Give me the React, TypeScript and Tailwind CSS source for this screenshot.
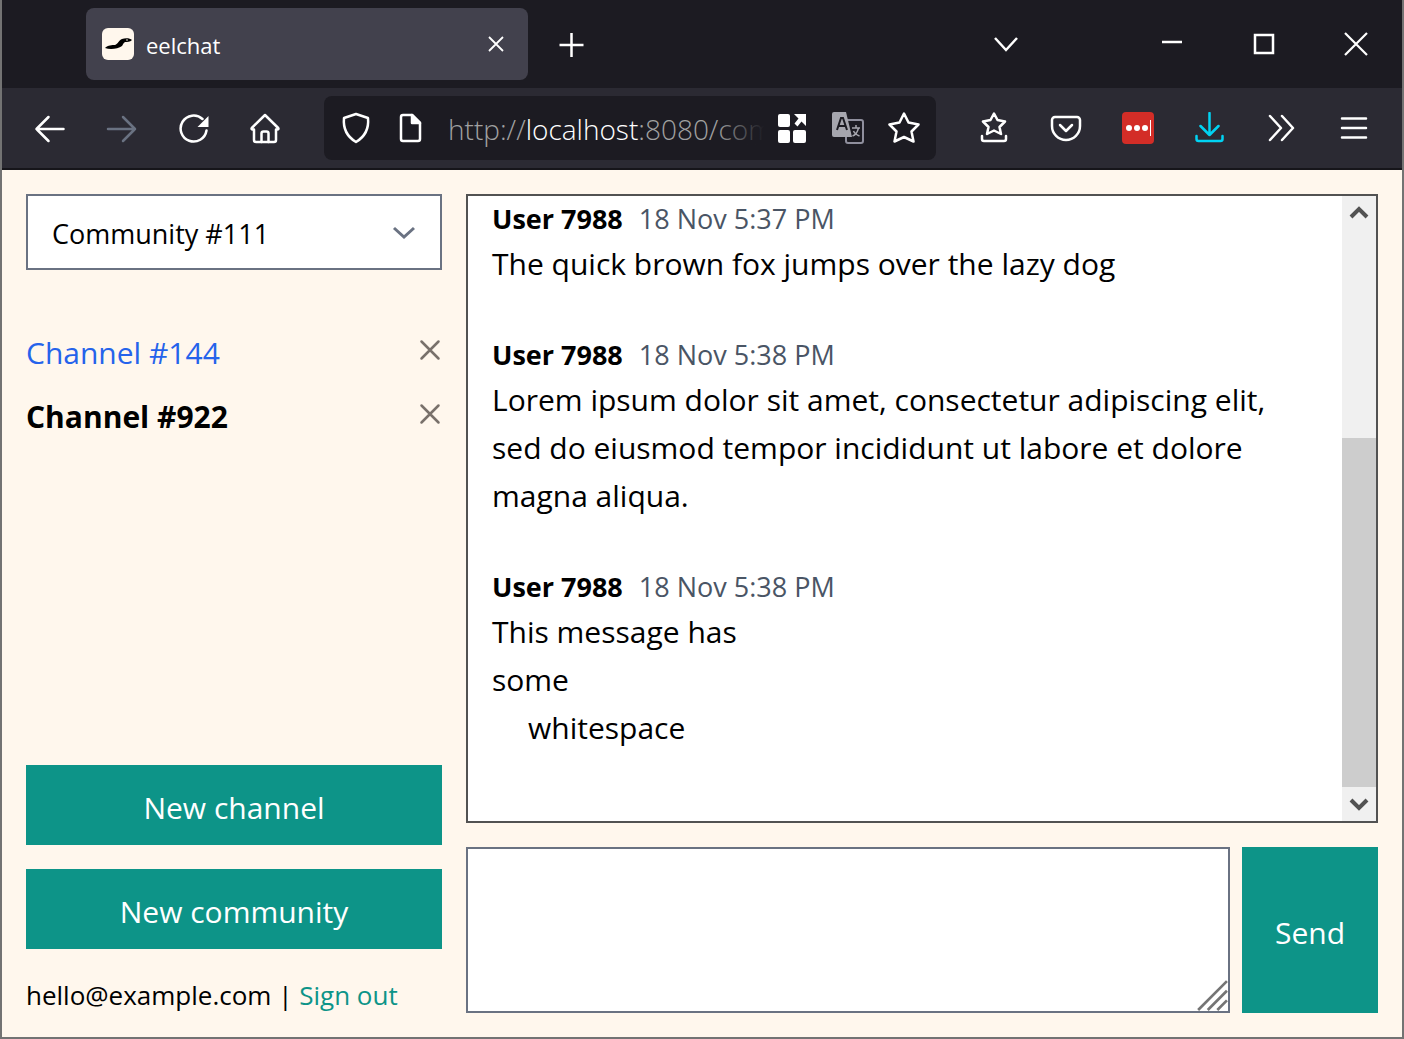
import type { ReactNode } from "react";

const Icon = ({ children, className = "w-8 h-8 text-white" }: { children: ReactNode; className?: string }) => (
  <svg
    viewBox="0 0 32 32"
    fill="none"
    stroke="currentColor"
    strokeWidth={2.5}
    strokeLinecap="round"
    strokeLinejoin="round"
    className={className}
  >
    {children}
  </svg>
);

const ToolButton = ({ children }: { children: ReactNode }) => (
  <div className="w-18 h-full flex items-center justify-center shrink-0">{children}</div>
);

const CloseIcon = () => (
  <svg viewBox="0 0 24 24" fill="none" stroke="currentColor" strokeWidth={2.5} strokeLinecap="round" className="w-6 h-6 text-stone-500">
    <path d="M3.5 3.5l17 17M20.5 3.5l-17 17" />
  </svg>
);

const Message = ({ time, children }: { time: string; children: ReactNode }) => (
  <div className="mb-12">
    <div className="flex items-baseline gap-4 h-10 leading-9.5">
      <span className="text-[27px] font-bold text-black">User 7988</span>
      <span className="text-[27px] text-gray-600">{time}</span>
    </div>
    <div className="text-3xl leading-12 text-black whitespace-pre-wrap">{children}</div>
  </div>
);

const Browser = () => (
  <div className="shrink-0 border-b-2 border-[#16151a]">
    {/* Tab strip */}
    <div className="h-22 bg-[#1c1b22] flex items-center pl-21">
      <div className="w-[442px] h-18 bg-[#42414d] rounded-lg flex items-center pl-4 pr-5">
        <div className="w-8 h-8 rounded-md bg-orange-50 flex items-center justify-center">
          <svg viewBox="0 0 32 32" className="w-8 h-8 text-black">
            <path
              fill="currentColor"
              d="M3 20c3-3 7-3 10-3 3-1 4-5 7-6 3-1 8-1 10 1-2 2-5 2-7 2-2 1-2 3-3 4-4 3-12 4-17 2z"
            />
            <circle cx="25" cy="12" r="0.8" fill="#fff7ed" />
          </svg>
        </div>
        <span className="ml-3 pt-0.5 text-[22px] text-white flex-1">eelchat</span>
        <svg viewBox="0 0 24 24" fill="none" stroke="currentColor" strokeWidth={1.8} className="w-6 h-6 text-white">
          <path d="M5 5l14 14M19 5L5 19" />
        </svg>
      </div>
      <div className="ml-7 w-8 h-8 translate-y-px">
        <svg viewBox="0 0 32 32" fill="none" stroke="currentColor" strokeWidth={2.5} className="w-8 h-8 text-white">
          <path d="M15.500 4v24M3.500 16h24" />
        </svg>
      </div>
      <div className="flex-1" />
      <div className="w-12 flex justify-center mr-24">
        <svg viewBox="0 0 32 32" fill="none" stroke="currentColor" strokeWidth={2.5} className="w-8 h-8 text-white">
          <path d="M5 10l11 12 11-12" />
        </svg>
      </div>
      <div className="w-23 flex justify-center">
        <svg viewBox="0 0 32 32" fill="none" stroke="currentColor" strokeWidth={2.5} className="w-8 h-8 text-white">
          <path d="M6 14h20" />
        </svg>
      </div>
      <div className="w-23 flex justify-center">
        <svg viewBox="0 0 32 32" fill="none" stroke="currentColor" strokeWidth={2.5} className="w-8 h-8 text-white">
          <path d="M7 7h18v18H7z" />
        </svg>
      </div>
      <div className="w-23 flex justify-center">
        <svg viewBox="0 0 32 32" fill="none" stroke="currentColor" strokeWidth={2.2} className="w-8 h-8 text-white">
          <path d="M5 5l22 22M27 5L5 27" />
        </svg>
      </div>
    </div>

    {/* Toolbar */}
    <div className="h-20 bg-[#2b2a33] flex items-center px-3">
      <ToolButton>
        <Icon>
          <path d="M29.500 17H2.500M14.500 5l-12 12 12 12" />
        </Icon>
      </ToolButton>
      <ToolButton>
        <Icon className="w-8 h-8 text-gray-500">
          <path d="M2 17h27M17 5l12 12-12 12" />
        </Icon>
      </ToolButton>
      <ToolButton>
        <Icon>
          <path d="M28.500 18.500a13 13 0 1 1-4-11.500" />
          <path d="M30.500 4v11h-11z" fill="currentColor" stroke="none" />
        </Icon>
      </ToolButton>
      <ToolButton>
        <Icon>
          <path d="M15 3L1.800 16c-.6.8 0 1.500.8 1.500H4V28a2 2 0 0 0 2 2h18a2 2 0 0 0 2-2V17.500h1.400c.8 0 1.400-.7.8-1.500z" />
          <path d="M11.500 30v-8.500a2 2 0 0 1 2-2h3a2 2 0 0 1 2 2V30" />
        </Icon>
      </ToolButton>

      <div className="relative flex-1 min-w-0 h-16 mx-5.5 bg-[#1c1b22] rounded-lg flex items-center pr-1">
        <div className="w-16 flex justify-center shrink-0">
          <Icon>
            <path d="M16 2l12 4c1 10-2 18-12 24C6 24 3 16 4 6z" />
          </Icon>
        </div>
        <div className="w-11 flex justify-center shrink-0">
          <Icon>
            <path d="M9 3h9l8 8v16a2 2 0 0 1-2 2H9a2 2 0 0 1-2-2V5a2 2 0 0 1 2-2z" />
            <path d="M18 3l8 8h-8z" fill="currentColor" />
          </Icon>
        </div>
        <div className="relative flex-1 min-w-0 ml-4 pt-0.5 overflow-hidden whitespace-nowrap text-[28px] font-light text-neutral-400">
          http://<span className="text-white">localhost</span>:8080/community/111
          <div className="absolute inset-y-0 right-0 w-12 bg-gradient-to-r from-transparent to-[#1c1b22]" />
        </div>
        <div className="flex items-center shrink-0">
          <div className="w-14 flex justify-center">
            <svg viewBox="0 0 32 32" className="w-8 h-8 text-white" fill="currentColor">
              <rect x="2" y="2" width="12" height="13" rx="2" />
              <rect x="2" y="18" width="12" height="13" rx="2" />
              <rect x="17" y="18" width="13" height="13" rx="2" />
              <path d="M18 2h12v12l-4.500-4.500-4 5-3-3 4-5z" />
            </svg>
          </div>
          <div className="w-14 flex justify-center">
            <svg viewBox="0 0 32 32" className="w-8 h-8">
              <rect x="14" y="8" width="17" height="23" rx="2" fill="#1c1b22" stroke="#8f8f9d" strokeWidth="2" />
              <path d="M2 0h12l6 25H2a2 2 0 0 1-2-2V2a2 2 0 0 1 2-2z" fill="#a6a6ae" />
              <path d="M5 18l4-12h2l4 12M7 14h6" fill="none" stroke="#1c1b22" strokeWidth="2" />
              <path d="M20 16h8M24 13v3M26.500 16c-1 4-3 7-6 8M21.500 19c1 2.500 3.500 4 6 5" fill="none" stroke="#a6a6ae" strokeWidth="1.500" />
            </svg>
          </div>
          <div className="w-14 flex justify-center">
            <Icon>
              <path d="M16 1.500l4.500 9 10 2-7 7 2 10-9.500-4.500-9.500 4.500 2-10-7-7 10-2z" />
            </Icon>
          </div>
        </div>
      </div>

      <ToolButton>
        <Icon>
          <path d="M16 1.500l3.500 6.500 7.500 1.500-5.500 5.500 1.500 7-7-3.500-7 3.500 1.500-7L5 9.500 12.500 8z" />
          <path d="M4 24v3a2 2 0 0 0 2 2h20a2 2 0 0 0 2-2v-3" />
        </Icon>
      </ToolButton>
      <ToolButton>
        <Icon>
          <path d="M5 5h22a3 3 0 0 1 3 3v6a14 14 0 0 1-28 0V8a3 3 0 0 1 3-3z" />
          <path d="M10 13l6 6 6-6" />
        </Icon>
      </ToolButton>
      <ToolButton>
        <div className="w-8 h-8 rounded-sm bg-[#d32d27] flex items-center justify-center gap-0.5">
          <span className="w-1.5 h-1.5 rounded-full bg-white" />
          <span className="w-1.5 h-1.5 rounded-full bg-white" />
          <span className="w-1.5 h-1.5 rounded-full bg-white" />
          <span className="w-px h-4 bg-white" />
        </div>
      </ToolButton>
      <ToolButton>
        <Icon className="w-8 h-8 text-cyan-400">
          <path d="M15.500 1v22M6.500 14l9 9 9-9" />
          <path d="M2.500 24v3a2 2 0 0 0 2 2h22a2 2 0 0 0 2-2v-3" />
        </Icon>
      </ToolButton>
      <ToolButton>
        <Icon>
          <path d="M4 4l11 12L4 28M16 4l11 12-11 12" />
        </Icon>
      </ToolButton>
      <ToolButton>
        <Icon>
          <path d="M4 6.500h24M4 16h24M4 25.500h24" />
        </Icon>
      </ToolButton>
    </div>
  </div>
);

export default function App() {
  return (
    <div className="h-screen flex flex-col border-x-2 border-b-2 border-neutral-500 font-['Open_Sans',sans-serif] overflow-hidden">
      <Browser />

      <div className="flex-1 min-h-0 bg-orange-50 flex gap-6 p-6">
        {/* Sidebar */}
        <div className="w-104 shrink-0 flex flex-col">
          <div className="h-19 border-2 border-gray-500 bg-white flex items-center justify-between px-6">
            <span className="pt-1 text-[27px] text-black">Community #111</span>
            <svg viewBox="0 0 24 24" fill="none" stroke="currentColor" strokeWidth={3} className="w-6 h-6 text-gray-500">
              <path d="M2 8l10 9 10-9" />
            </svg>
          </div>

          <div className="mt-12 flex flex-col">
            <div className="h-16 flex items-center justify-between">
              <span className="pt-1.5 text-3xl text-[#2563eb]">Channel #144</span>
              <CloseIcon />
            </div>
            <div className="h-16 flex items-center justify-between">
              <span className="pt-1.5 text-3xl font-bold text-black">Channel #922</span>
              <CloseIcon />
            </div>
          </div>

          <div className="mt-auto flex flex-col gap-6">
            <button className="h-20 pt-1.5 bg-[#0d9488] text-white text-3xl">New channel</button>
            <button className="h-20 pt-1.5 bg-[#0d9488] text-white text-3xl">New community</button>
          </div>
          <div className="mt-6 pt-0.5 h-10 leading-10 text-[26px] text-black whitespace-nowrap">
            hello@example.com | <span className="text-[#0d9488]">Sign out</span>
          </div>
        </div>

        {/* Chat */}
        <div className="flex-1 min-w-0 flex flex-col gap-6">
          <div className="flex-1 min-h-0 border-2 border-neutral-600 bg-white flex">
            <div className="flex-1 min-w-0 overflow-hidden px-6 pt-1">
              <Message time="18 Nov 5:37 PM">The quick brown fox jumps over the lazy dog</Message>
              <Message time="18 Nov 5:38 PM">
                Lorem ipsum dolor sit amet, consectetur adipiscing elit, sed do eiusmod tempor incididunt ut labore et dolore magna aliqua.
              </Message>
              <Message time="18 Nov 5:38 PM">
                {"This message has\nsome"}
                <div className="pl-9">whitespace</div>
              </Message>
            </div>
            {/* Scrollbar */}
            <div className="w-8.5 shrink-0 bg-[#f0f0f0] flex flex-col">
              <div className="h-8.5 flex items-center justify-center">
                <svg viewBox="0 0 20 20" fill="none" stroke="currentColor" strokeWidth={4} className="w-5 h-5 text-neutral-600">
                  <path d="M2 14l8-8 8 8" />
                </svg>
              </div>
              <div className="flex-1 flex flex-col">
                <div className="h-52" />
                <div className="flex-1 bg-[#cdcdcd]" />
              </div>
              <div className="h-8.5 flex items-center justify-center">
                <svg viewBox="0 0 20 20" fill="none" stroke="currentColor" strokeWidth={4} className="w-5 h-5 text-neutral-600">
                  <path d="M2 6l8 8 8-8" />
                </svg>
              </div>
            </div>
          </div>

          <div className="h-41.5 shrink-0 flex gap-3">
            <div className="relative flex-1 min-w-0">
              <textarea className="w-full h-full resize-none border-2 border-gray-500 bg-white block" />
              <svg viewBox="0 0 30 30" stroke="#757575" strokeWidth={2.5} className="absolute right-0.5 bottom-0.5 w-8 h-8">
                <path d="M2 29L29 2M11 29L29 11M20 29l9-9" />
              </svg>
            </div>
            <button className="w-34 pt-1.5 shrink-0 bg-[#0d9488] text-white text-3xl">Send</button>
          </div>
        </div>
      </div>
    </div>
  );
}
